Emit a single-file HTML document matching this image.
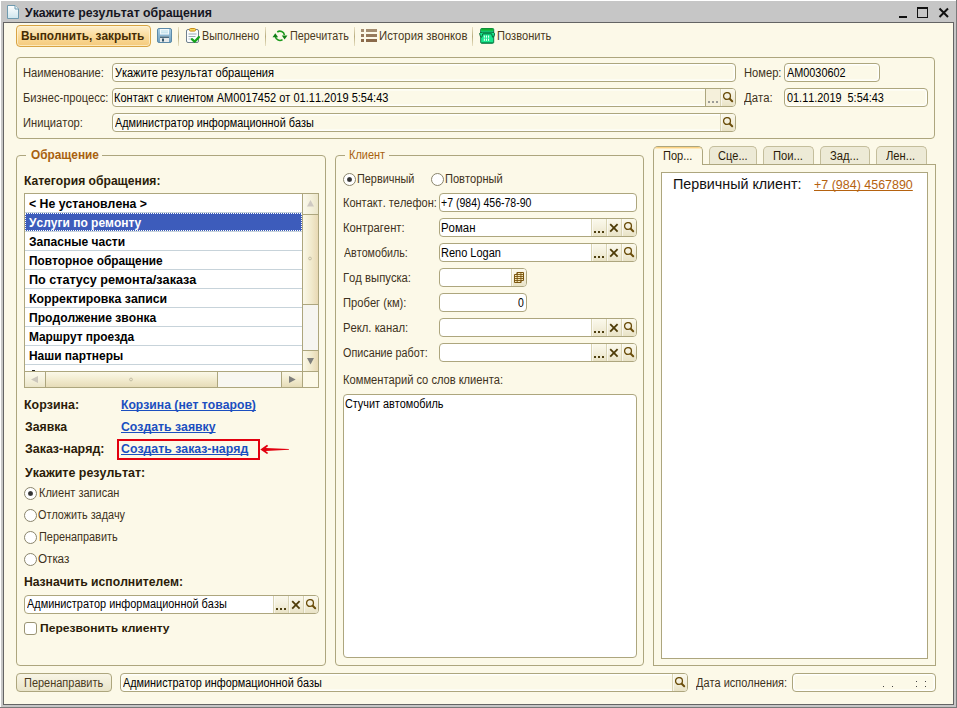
<!DOCTYPE html>
<html><head><meta charset="utf-8"><title>form</title>
<style>
html,body{margin:0;padding:0;}
body{width:957px;height:708px;overflow:hidden;position:relative;background:#FCF9E8;font-family:"Liberation Sans",sans-serif;}
#w{position:absolute;left:0;top:0;width:957px;height:708px;overflow:hidden;}
#w div,#w svg,#w span{position:absolute;}
.t{white-space:nowrap;text-decoration-skip-ink:none;font-kerning:none;}
</style></head><body><div id="w">
<div style="left:0px;top:0px;width:957px;height:708px;background:#C6C6C6;"></div>
<div style="left:0px;top:0px;width:957px;height:1px;background:#ffffff;"></div>
<div style="left:0px;top:0px;width:1px;height:708px;background:#ffffff;"></div>
<div style="left:956px;top:0px;width:1px;height:708px;background:#7a7a7a;"></div>
<div style="left:0px;top:707px;width:957px;height:1px;background:#7a7a7a;"></div>
<div style="left:3px;top:22px;width:951px;height:683px;background:#646464;"></div>
<div style="left:4px;top:23px;width:949px;height:681px;background:#FCF9E8;"></div>
<svg style="left:6px;top:4px" width="14" height="16" viewBox="0 0 14 16">
<defs><linearGradient id="dg" x1="0" y1="0" x2="0" y2="1"><stop offset="0" stop-color="#ffffff"/><stop offset="1" stop-color="#cfe6ee"/></linearGradient></defs>
<path d="M1.5 1.5 H9 L12.5 5 V14.5 H1.5 Z" fill="url(#dg)" stroke="#6f9bb0" stroke-width="1"/>
<path d="M9 1.5 V5 H12.5" fill="#eaf4f8" stroke="#6f9bb0" stroke-width="1"/></svg>
<span class="t" style="left:24.99px;top:6px;font-size:12.5px;line-height:14px;font-weight:bold;color:#15151f;transform:scaleX(0.9830);transform-origin:0 0;">Укажите результат обращения</span>
<div style="left:899px;top:16px;width:8px;height:2px;background:#111;"></div>
<div style="left:917px;top:7px;width:11px;height:11px;border:1px solid #111;border-top:2px solid #111;box-sizing:border-box;"></div>
<svg style="left:938px;top:7px" width="12" height="12" viewBox="0 0 12 12"><path d="M1.5 1.5 L10 10 M10 1.5 L1.5 10" stroke="#111" stroke-width="2" fill="none"/></svg>
<div style="left:16px;top:25px;width:135px;height:22px;border:1px solid #D9A443;border-radius:4px;box-sizing:border-box;background:linear-gradient(#FEEFCC,#FADB9C 50%,#F5CA7C);box-shadow:inset 0 0 0 1px rgba(255,245,215,0.7);"></div>
<span class="t" style="left:21.21px;top:29px;font-size:12px;line-height:14px;font-weight:bold;color:#452c04;transform:scaleX(0.9852);transform-origin:0 0;">Выполнить, закрыть</span>
<svg style="left:157px;top:28px" width="15" height="15" viewBox="0 0 15 15">
<defs><linearGradient id="sg" x1="0" y1="0" x2="0" y2="1"><stop offset="0" stop-color="#a9cfe6"/><stop offset="1" stop-color="#6d9dbd"/></linearGradient></defs>
<rect x="0.5" y="0.5" width="14" height="14" rx="1.5" fill="url(#sg)" stroke="#5c8aa8"/>
<rect x="3" y="1" width="9" height="5.5" fill="#f4fafc"/>
<rect x="4" y="2.5" width="7" height="1" fill="#b5dbe8"/><rect x="4" y="4.3" width="7" height="1" fill="#b5dbe8"/>
<rect x="3" y="8.5" width="9" height="5.5" fill="#e6e9ea"/><rect x="3" y="8.5" width="9" height="1.5" fill="#4d6b7e"/>
<rect x="5" y="10.5" width="2" height="3" fill="#34566b"/>
</svg>
<div style="left:178px;top:27px;width:1px;height:19px;background:linear-gradient(#e9e2c4,#b9ad80 50%,#e9e2c4);"></div>
<svg style="left:186px;top:28px" width="15" height="16" viewBox="0 0 15 16">
<rect x="0.5" y="1.5" width="12" height="13" rx="1.5" fill="#fbfdfe" stroke="#70808e"/>
<rect x="3.5" y="0.5" width="6" height="2.6" rx="1" fill="#f7d75a" stroke="#c98f1c"/>
<rect x="2.5" y="5.5" width="8" height="1" fill="#9aa9b4"/><rect x="2.5" y="8" width="7" height="1" fill="#9aa9b4"/><rect x="2.5" y="10.5" width="3" height="1" fill="#b9c6cf"/>
<path d="M5.9 11.2 L8.6 13.7 L12.9 9.1" stroke="#16a51c" stroke-width="2.3" fill="none" stroke-linecap="round" stroke-linejoin="round"/>
</svg>
<span class="t" style="left:202.11px;top:29px;font-size:12.5px;line-height:14px;font-weight:normal;color:#4a3a1c;transform:scaleX(0.8683);transform-origin:0 0;">Выполнено</span>
<div style="left:265px;top:27px;width:1px;height:19px;background:linear-gradient(#e9e2c4,#b9ad80 50%,#e9e2c4);"></div>
<svg style="left:272px;top:29px" width="16" height="14" viewBox="0 0 16 14">
<path d="M5.26 3.03 A4.6 4.6 0 0 1 12.43 6.0" stroke="#1c9a1c" stroke-width="1.6" fill="none"/>
<path d="M10.54 10.57 A4.6 4.6 0 0 1 3.37 7.6" stroke="#1c9a1c" stroke-width="1.6" fill="none"/>
<path d="M0.5 8.3 L3.3 4.3 L6.1 8.3 Z" fill="#0f7f14"/>
<path d="M9.8 6.6 L12.6 10.6 L15.4 6.6 Z" fill="#0f7f14"/>
</svg>
<span class="t" style="left:289.63px;top:29px;font-size:12.5px;line-height:14px;font-weight:normal;color:#4a3a1c;transform:scaleX(0.8618);transform-origin:0 0;">Перечитать</span>
<div style="left:354px;top:27px;width:1px;height:19px;background:linear-gradient(#e9e2c4,#b9ad80 50%,#e9e2c4);"></div>
<div style="left:361px;top:29px;width:3px;height:3px;background:#a58e70;"></div>
<div style="left:366px;top:29px;width:11px;height:3px;background:#a58e70;"></div>
<div style="left:361px;top:34px;width:3px;height:3px;background:#977b5c;"></div>
<div style="left:366px;top:34px;width:11px;height:3px;background:#977b5c;"></div>
<div style="left:361px;top:39px;width:3px;height:3px;background:#8a6a4b;"></div>
<div style="left:366px;top:39px;width:11px;height:3px;background:#8a6a4b;"></div>
<span class="t" style="left:378.57px;top:29px;font-size:12.5px;line-height:14px;font-weight:normal;color:#4a3a1c;transform:scaleX(0.9081);transform-origin:0 0;">История звонков</span>
<div style="left:472px;top:27px;width:1px;height:19px;background:linear-gradient(#e9e2c4,#b9ad80 50%,#e9e2c4);"></div>
<svg style="left:479px;top:28px" width="16" height="16" viewBox="0 0 16 16">
<rect x="1.7" y="0.5" width="13" height="14.8" rx="1" fill="#17E78C" stroke="#0c7a44"/>
<rect x="2.2" y="0.6" width="12" height="2.1" fill="#12AE2E"/>
<path d="M0.6 5.4 Q1.2 4.2 3.5 4.2 H12.9 Q15.2 4.2 15.6 5.6 L15 8.6 L13.6 9.2 L12.6 5.8 H3.8 L2.8 9.2 L1.4 8.6 Z" fill="#17E78C" stroke="#075a2c" stroke-width="0.9"/>
<rect x="4.8" y="7.5" width="1.1" height="2.2" fill="#eafff4"/><rect x="6.9" y="7.5" width="1.1" height="2.2" fill="#eafff4"/><rect x="9" y="7.5" width="1.1" height="2.2" fill="#eafff4"/>
<rect x="4.8" y="10.6" width="1.1" height="2.2" fill="#eafff4"/><rect x="6.9" y="10.6" width="1.1" height="2.2" fill="#eafff4"/><rect x="9" y="10.6" width="1.1" height="2.2" fill="#eafff4"/>
<rect x="2.2" y="14" width="12" height="1" fill="#0c9a58"/>
</svg>
<span class="t" style="left:496.60px;top:29px;font-size:12.5px;line-height:14px;font-weight:normal;color:#4a3a1c;transform:scaleX(0.8854);transform-origin:0 0;">Позвонить</span>
<div style="left:16px;top:57px;width:919px;height:82px;border:1px solid #ADA67E;border-radius:4px;box-sizing:border-box;"></div>
<span class="t" style="left:23.08px;top:66px;font-size:12.5px;line-height:14px;font-weight:normal;color:#3e3220;transform:scaleX(0.8967);transform-origin:0 0;">Наименование:</span>
<div style="left:112px;top:63px;width:624px;height:19px;border:1px solid #ADA67E;border-radius:4px;box-sizing:border-box;background:#FCF9E8;box-shadow:inset 0 0 0 1px #fffffc,inset 0 0 0 2px rgba(255,255,255,0.45);overflow:hidden;"></div>
<span class="t" style="left:114.70px;top:66px;font-size:12.5px;line-height:14px;font-weight:normal;color:#000;transform:scaleX(0.8870);transform-origin:0 0;">Укажите результат обращения</span>
<span class="t" style="left:23.09px;top:91px;font-size:12.5px;line-height:14px;font-weight:normal;color:#3e3220;transform:scaleX(0.8904);transform-origin:0 0;">Бизнес-процесс:</span>
<div style="left:112px;top:88px;width:624px;height:19px;border:1px solid #ADA67E;border-radius:4px;box-sizing:border-box;background:#FCF9E8;box-shadow:inset 0 0 0 1px #fffffc,inset 0 0 0 2px rgba(255,255,255,0.45);overflow:hidden;"></div>
<div style="left:705px;top:89px;width:30px;height:17px;background:linear-gradient(#FBF9EC,#F3EFDC 50%,#E9E3C6);border-radius:0 3px 3px 0;"></div>
<div style="left:705px;top:89px;width:15px;height:17px;background:#F5F0DB;"></div>
<div style="left:705px;top:89px;width:1px;height:17px;background:#ADA67E;"></div>
<div style="left:708px;top:101px;width:2px;height:2px;background:#9c9c98;"></div>
<div style="left:712px;top:101px;width:2px;height:2px;background:#9c9c98;"></div>
<div style="left:716px;top:101px;width:2px;height:2px;background:#9c9c98;"></div>
<div style="left:720px;top:89px;width:1px;height:17px;background:#d9d4b4;"></div>
<div style="left:721px;top:89px;width:1px;height:17px;background:rgba(255,255,255,0.6);"></div>
<svg style="left:723px;top:92px" width="12" height="12" viewBox="0 0 12 12"><circle cx="4" cy="4" r="3.45" stroke="#6b4e0c" stroke-width="1.3" fill="none"/><path d="M6.7 6.7 L9.2 9.2" stroke="#6b4e0c" stroke-width="2" stroke-linecap="round"/></svg>
<span class="t" style="left:114.10px;top:91px;font-size:12.5px;line-height:14px;font-weight:normal;color:#000;transform:scaleX(0.8814);transform-origin:0 0;">Контакт с клиентом АМ0017452 от 01.11.2019 5:54:43</span>
<span class="t" style="left:23.08px;top:116px;font-size:12.5px;line-height:14px;font-weight:normal;color:#3e3220;transform:scaleX(0.8937);transform-origin:0 0;">Инициатор:</span>
<div style="left:112px;top:113px;width:624px;height:19px;border:1px solid #ADA67E;border-radius:4px;box-sizing:border-box;background:#FCF9E8;box-shadow:inset 0 0 0 1px #fffffc,inset 0 0 0 2px rgba(255,255,255,0.45);overflow:hidden;"></div>
<div style="left:720px;top:114px;width:15px;height:17px;background:linear-gradient(#FBF9EC,#F3EFDC 50%,#E9E3C6);border-radius:0 3px 3px 0;"></div>
<div style="left:720px;top:114px;width:1px;height:17px;background:#d9d4b4;"></div>
<div style="left:721px;top:114px;width:1px;height:17px;background:rgba(255,255,255,0.6);"></div>
<svg style="left:723px;top:117px" width="12" height="12" viewBox="0 0 12 12"><circle cx="4" cy="4" r="3.45" stroke="#6b4e0c" stroke-width="1.3" fill="none"/><path d="M6.7 6.7 L9.2 9.2" stroke="#6b4e0c" stroke-width="2" stroke-linecap="round"/></svg>
<span class="t" style="left:114.98px;top:116px;font-size:12.5px;line-height:14px;font-weight:normal;color:#000;transform:scaleX(0.8687);transform-origin:0 0;">Администратор информационной базы</span>
<span class="t" style="left:743.58px;top:66px;font-size:12.5px;line-height:14px;font-weight:normal;color:#3e3220;transform:scaleX(0.8923);transform-origin:0 0;">Номер:</span>
<div style="left:784px;top:63px;width:96px;height:19px;border:1px solid #ADA67E;border-radius:4px;box-sizing:border-box;background:#FCF9E8;box-shadow:inset 0 0 0 1px #fffffc,inset 0 0 0 2px rgba(255,255,255,0.45);overflow:hidden;"></div>
<span class="t" style="left:786.98px;top:66px;font-size:12.5px;line-height:14px;font-weight:normal;color:#000;transform:scaleX(0.8688);transform-origin:0 0;">АМ0030602</span>
<span class="t" style="left:744.42px;top:91px;font-size:12.5px;line-height:14px;font-weight:normal;color:#3e3220;transform:scaleX(0.9066);transform-origin:0 0;">Дата:</span>
<div style="left:784px;top:88px;width:144px;height:19px;border:1px solid #ADA67E;border-radius:4px;box-sizing:border-box;background:#FCF9E8;box-shadow:inset 0 0 0 1px #fffffc,inset 0 0 0 2px rgba(255,255,255,0.45);overflow:hidden;"></div>
<span class="t" style="left:786.57px;top:91px;font-size:12.5px;line-height:14px;font-weight:normal;color:#000;transform:scaleX(0.8713);transform-origin:0 0;">01.11.2019&nbsp; 5:54:43</span>
<div style="left:16px;top:155px;width:310px;height:511px;border:1px solid #ADA67E;border-radius:4px;box-sizing:border-box;"></div>
<div style="left:26px;top:155px;width:76px;height:2px;background:#FCF9E8;"></div>
<span class="t" style="left:30.51px;top:148px;font-size:12.5px;line-height:14px;font-weight:bold;color:#a8610e;transform:scaleX(0.9466);transform-origin:0 0;">Обращение</span>
<span class="t" style="left:24.19px;top:174px;font-size:12.5px;line-height:14px;font-weight:bold;color:#2b1c08;transform:scaleX(0.9699);transform-origin:0 0;">Категория обращения:</span>
<div style="left:24px;top:193px;width:295px;height:195px;border:1px solid #ADA67E;box-sizing:border-box;background:#fff;"></div>
<div style="left:25px;top:212px;width:277px;height:1px;background:#C7D3DA;"></div>
<span class="t" style="left:28.98px;top:197px;font-size:12.5px;line-height:14px;font-weight:bold;color:#000;transform:scaleX(0.9815);transform-origin:0 0;">&lt; Не установлена &gt;</span>
<div style="left:25px;top:231px;width:277px;height:1px;background:#C7D3DA;"></div>
<div style="left:25px;top:213px;width:277px;height:18px;background:#3D5CBB;"></div>
<div style="left:25px;top:213px;width:277px;height:18px;background:repeating-linear-gradient(90deg,#fff 0 1px,transparent 1px 2px) 0 0/100% 1px no-repeat,repeating-linear-gradient(90deg,#fff 0 1px,transparent 1px 2px) 0 100%/100% 1px no-repeat,repeating-linear-gradient(0deg,#fff 0 1px,transparent 1px 2px) 0 0/1px 100% no-repeat,repeating-linear-gradient(0deg,#fff 0 1px,transparent 1px 2px) 100% 0/1px 100% no-repeat;"></div>
<span class="t" style="left:29.49px;top:216px;font-size:12.5px;line-height:14px;font-weight:bold;color:#fff;transform:scaleX(0.9600);transform-origin:0 0;">Услуги по ремонту</span>
<div style="left:25px;top:250px;width:277px;height:1px;background:#C7D3DA;"></div>
<span class="t" style="left:29.23px;top:235px;font-size:12.5px;line-height:14px;font-weight:bold;color:#000;transform:scaleX(0.9625);transform-origin:0 0;">Запасные части</span>
<div style="left:25px;top:269px;width:277px;height:1px;background:#C7D3DA;"></div>
<span class="t" style="left:28.71px;top:254px;font-size:12.5px;line-height:14px;font-weight:bold;color:#000;transform:scaleX(0.9486);transform-origin:0 0;">Повторное обращение</span>
<div style="left:25px;top:288px;width:277px;height:1px;background:#C7D3DA;"></div>
<span class="t" style="left:28.66px;top:273px;font-size:12.5px;line-height:14px;font-weight:bold;color:#000;transform:scaleX(1.0096);transform-origin:0 0;">По статусу ремонта/заказа</span>
<div style="left:25px;top:307px;width:277px;height:1px;background:#C7D3DA;"></div>
<span class="t" style="left:28.68px;top:292px;font-size:12.5px;line-height:14px;font-weight:bold;color:#000;transform:scaleX(0.9854);transform-origin:0 0;">Корректировка записи</span>
<div style="left:25px;top:326px;width:277px;height:1px;background:#C7D3DA;"></div>
<span class="t" style="left:28.69px;top:311px;font-size:12.5px;line-height:14px;font-weight:bold;color:#000;transform:scaleX(0.9673);transform-origin:0 0;">Продолжение звонка</span>
<div style="left:25px;top:345px;width:277px;height:1px;background:#C7D3DA;"></div>
<span class="t" style="left:28.70px;top:330px;font-size:12.5px;line-height:14px;font-weight:bold;color:#000;transform:scaleX(0.9525);transform-origin:0 0;">Маршрут проезда</span>
<div style="left:25px;top:364px;width:277px;height:1px;background:#C7D3DA;"></div>
<span class="t" style="left:28.70px;top:349px;font-size:12.5px;line-height:14px;font-weight:bold;color:#000;transform:scaleX(0.9544);transform-origin:0 0;">Наши партнеры</span>
<div style="left:32px;top:370px;width:3px;height:1px;background:#222;"></div>
<div style="left:302px;top:194px;width:16px;height:177px;background:#F6F5F0;"></div>
<div style="left:302px;top:194px;width:1px;height:177px;background:#ADA67E;"></div>
<div style="left:303px;top:194px;width:15px;height:20px;background:linear-gradient(90deg,#FBF9EC,#F3EFD9 60%,#EBE5C9);"></div>
<div style="left:303px;top:214px;width:15px;height:1px;background:#ADA67E;"></div>
<div style="left:303px;top:215px;width:15px;height:89px;background:linear-gradient(90deg,#FBF8E8,#F1EACD 55%,#E8D9B4);"></div>
<div style="left:303px;top:304px;width:15px;height:1px;background:#ADA67E;"></div>
<div style="left:303px;top:350px;width:15px;height:1px;background:#ADA67E;"></div>
<div style="left:303px;top:351px;width:15px;height:20px;background:linear-gradient(90deg,#FBF8E8,#F1EACD 55%,#E8D9B4);"></div>
<svg style="left:307px;top:200px" width="7" height="7" viewBox="0 0 7 7"><path d="M0 6.5 L3.5 0 L7 6.5 Z" fill="#cfc9c2"/></svg>
<svg style="left:307px;top:358px" width="7" height="7" viewBox="0 0 7 7"><path d="M0 0 L7 0 L3.5 6.5 Z" fill="#7f7f7c"/></svg>
<svg style="left:308px;top:256px" width="4" height="5" viewBox="0 0 4 5"><circle cx="2" cy="2.5" r="1.4" fill="none" stroke="#b9b39a" stroke-width="0.8"/></svg>
<div style="left:25px;top:371px;width:293px;height:1px;background:#ADA67E;"></div>
<div style="left:25px;top:372px;width:293px;height:15px;background:#F8F7F1;"></div>
<div style="left:25px;top:372px;width:20px;height:15px;background:linear-gradient(#FBF9EC,#F3EFD9 60%,#EBE5C9);"></div>
<div style="left:45px;top:372px;width:1px;height:15px;background:#ADA67E;"></div>
<div style="left:46px;top:372px;width:171px;height:15px;background:linear-gradient(#FBF8E8,#F1EACD 55%,#E6DCB8);"></div>
<div style="left:217px;top:372px;width:1px;height:15px;background:#ADA67E;"></div>
<div style="left:281px;top:372px;width:1px;height:15px;background:#ADA67E;"></div>
<div style="left:282px;top:372px;width:20px;height:15px;background:linear-gradient(#FBF8E8,#F1EACD 55%,#E6DCB8);"></div>
<div style="left:302px;top:371px;width:1px;height:16px;background:#ADA67E;"></div>
<div style="left:303px;top:372px;width:15px;height:15px;background:#FCF9E8;"></div>
<svg style="left:31px;top:376px" width="7" height="7" viewBox="0 0 7 7"><path d="M7 0 L0 3.5 L7 7 Z" fill="#cbc6bb"/></svg>
<svg style="left:289px;top:376px" width="7" height="7" viewBox="0 0 7 7"><path d="M0 0 L6.7 3.5 L0 7 Z" fill="#7f7f7c"/></svg>
<svg style="left:129px;top:377px" width="4" height="5" viewBox="0 0 4 5"><circle cx="2" cy="2.5" r="1.4" fill="none" stroke="#b9b39a" stroke-width="0.8"/></svg>
<span class="t" style="left:24.17px;top:398px;font-size:12.5px;line-height:14px;font-weight:bold;color:#2b1c08;transform:scaleX(0.9921);transform-origin:0 0;">Корзина:</span>
<span class="t" style="left:120.69px;top:398px;font-size:12.5px;line-height:14px;font-weight:bold;color:#1b4fc0;transform:scaleX(0.9738);transform-origin:0 0;text-decoration:underline;">Корзина (нет товаров)</span>
<span class="t" style="left:24.72px;top:420px;font-size:12.5px;line-height:14px;font-weight:bold;color:#2b1c08;transform:scaleX(0.9821);transform-origin:0 0;">Заявка</span>
<span class="t" style="left:121.00px;top:420px;font-size:12.5px;line-height:14px;font-weight:bold;color:#1b4fc0;transform:scaleX(0.9811);transform-origin:0 0;text-decoration:underline;">Создать заявку</span>
<span class="t" style="left:24.72px;top:442px;font-size:12.5px;line-height:14px;font-weight:bold;color:#2b1c08;transform:scaleX(0.9947);transform-origin:0 0;">Заказ-наряд:</span>
<span class="t" style="left:120.99px;top:442px;font-size:12.5px;line-height:14px;font-weight:bold;color:#1b4fc0;transform:scaleX(0.9851);transform-origin:0 0;text-decoration:underline;">Создать заказ-наряд</span>
<div style="left:117px;top:439px;width:143px;height:21px;border:2px solid #e2000f;box-sizing:border-box;"></div>
<svg style="left:260px;top:444px" width="30" height="11" viewBox="0 0 30 11"><path d="M0.3 5.4 L7.0 0.8 L8.2 1.9 L5.8 3.9 L28.9 5.0 L28.9 5.8 L5.8 6.9 L8.2 8.9 L7.0 10 Z" fill="#e2000f"/></svg>
<span class="t" style="left:24.99px;top:466px;font-size:12.5px;line-height:14px;font-weight:bold;color:#2b1c08;transform:scaleX(0.9949);transform-origin:0 0;">Укажите результат:</span>
<div style="left:24.0px;top:487.0px;width:13px;height:13px;border:1px solid #8a856c;border-radius:50%;box-sizing:border-box;background:#fff;"><div style="left:3px;top:3px;width:5px;height:5px;border-radius:50%;background:radial-gradient(#333 40%,#777);"></div></div>
<span class="t" style="left:39.29px;top:486px;font-size:12.5px;line-height:14px;font-weight:normal;color:#3e3220;transform:scaleX(0.8828);transform-origin:0 0;">Клиент записан</span>
<div style="left:24.0px;top:509.0px;width:13px;height:13px;border:1px solid #8a856c;border-radius:50%;box-sizing:border-box;background:#fff;"></div>
<span class="t" style="left:38.49px;top:508px;font-size:12.5px;line-height:14px;font-weight:normal;color:#3e3220;transform:scaleX(0.8665);transform-origin:0 0;">Отложить задачу</span>
<div style="left:24.0px;top:531.0px;width:13px;height:13px;border:1px solid #8a856c;border-radius:50%;box-sizing:border-box;background:#fff;"></div>
<span class="t" style="left:39.32px;top:530px;font-size:12.5px;line-height:14px;font-weight:normal;color:#3e3220;transform:scaleX(0.8715);transform-origin:0 0;">Перенаправить</span>
<div style="left:24.0px;top:553.0px;width:13px;height:13px;border:1px solid #8a856c;border-radius:50%;box-sizing:border-box;background:#fff;"></div>
<span class="t" style="left:38.45px;top:552px;font-size:12.5px;line-height:14px;font-weight:normal;color:#3e3220;transform:scaleX(0.9374);transform-origin:0 0;">Отказ</span>
<span class="t" style="left:23.69px;top:575px;font-size:12.5px;line-height:14px;font-weight:bold;color:#2b1c08;transform:scaleX(0.9737);transform-origin:0 0;">Назначить исполнителем:</span>
<div style="left:24px;top:595px;width:295px;height:19px;border:1px solid #ADA67E;border-radius:4px;box-sizing:border-box;background:#fff;overflow:hidden;"></div>
<div style="left:273px;top:596px;width:45px;height:17px;background:linear-gradient(#FBF9EC,#F3EFDC 50%,#E9E3C6);border-radius:0 3px 3px 0;"></div>
<div style="left:273px;top:596px;width:1px;height:17px;background:#d9d4b4;"></div>
<div style="left:274px;top:596px;width:1px;height:17px;background:rgba(255,255,255,0.6);"></div>
<div style="left:276px;top:608px;width:2px;height:2px;background:#4e3f10;"></div>
<div style="left:280px;top:608px;width:2px;height:2px;background:#4e3f10;"></div>
<div style="left:284px;top:608px;width:2px;height:2px;background:#4e3f10;"></div>
<div style="left:288px;top:596px;width:1px;height:17px;background:#d9d4b4;"></div>
<div style="left:289px;top:596px;width:1px;height:17px;background:rgba(255,255,255,0.6);"></div>
<svg style="left:291px;top:599.6px" width="10" height="10" viewBox="0 0 10 10"><path d="M1.2 1.2 L8.6 8.6 M8.6 1.2 L1.2 8.6" stroke="#4e3c08" stroke-width="1.8" fill="none"/></svg>
<div style="left:303px;top:596px;width:1px;height:17px;background:#d9d4b4;"></div>
<div style="left:304px;top:596px;width:1px;height:17px;background:rgba(255,255,255,0.6);"></div>
<svg style="left:306px;top:599px" width="12" height="12" viewBox="0 0 12 12"><circle cx="4" cy="4" r="3.45" stroke="#6b4e0c" stroke-width="1.3" fill="none"/><path d="M6.7 6.7 L9.2 9.2" stroke="#6b4e0c" stroke-width="2" stroke-linecap="round"/></svg>
<span class="t" style="left:26.98px;top:597px;font-size:12.5px;line-height:14px;font-weight:normal;color:#000;transform:scaleX(0.8731);transform-origin:0 0;">Администратор информационной базы</span>
<div style="left:24px;top:622px;width:13px;height:13px;border:1px solid #9a9474;border-radius:3px;box-sizing:border-box;background:#fff;"></div>
<span class="t" style="left:40.19px;top:621px;font-size:11.8px;line-height:14px;font-weight:bold;color:#2b1c08;transform:scaleX(1.0225);transform-origin:0 0;">Перезвонить клиенту</span>
<div style="left:335px;top:155px;width:309px;height:511px;border:1px solid #ADA67E;border-radius:4px;box-sizing:border-box;"></div>
<div style="left:345px;top:155px;width:44px;height:2px;background:#FCF9E8;"></div>
<span class="t" style="left:349.10px;top:148px;font-size:12.5px;line-height:14px;font-weight:normal;color:#a8610e;transform:scaleX(0.8772);transform-origin:0 0;">Клиент</span>
<div style="left:343.0px;top:173.0px;width:13px;height:13px;border:1px solid #8a856c;border-radius:50%;box-sizing:border-box;background:#fff;"><div style="left:3px;top:3px;width:5px;height:5px;border-radius:50%;background:radial-gradient(#333 40%,#777);"></div></div>
<span class="t" style="left:357.42px;top:172px;font-size:12.5px;line-height:14px;font-weight:normal;color:#3e3220;transform:scaleX(0.8701);transform-origin:0 0;">Первичный</span>
<div style="left:431.0px;top:173.0px;width:13px;height:13px;border:1px solid #8a856c;border-radius:50%;box-sizing:border-box;background:#fff;"></div>
<span class="t" style="left:445.10px;top:172px;font-size:12.5px;line-height:14px;font-weight:normal;color:#3e3220;transform:scaleX(0.8861);transform-origin:0 0;">Повторный</span>
<span class="t" style="left:342.90px;top:196px;font-size:12.5px;line-height:14px;font-weight:normal;color:#3e3220;transform:scaleX(0.8809);transform-origin:0 0;">Контакт. телефон:</span>
<div style="left:439px;top:193px;width:198px;height:19px;border:1px solid #ADA67E;border-radius:4px;box-sizing:border-box;background:#fff;overflow:hidden;"></div>
<span class="t" style="left:441.49px;top:196px;font-size:12.5px;line-height:14px;font-weight:normal;color:#000;transform:scaleX(0.8422);transform-origin:0 0;">+7 (984) 456-78-90</span>
<span class="t" style="left:342.88px;top:221px;font-size:12.5px;line-height:14px;font-weight:normal;color:#3e3220;transform:scaleX(0.9017);transform-origin:0 0;">Контрагент:</span>
<div style="left:439px;top:218px;width:198px;height:19px;border:1px solid #ADA67E;border-radius:4px;box-sizing:border-box;background:#fff;overflow:hidden;"></div>
<div style="left:591px;top:219px;width:45px;height:17px;background:linear-gradient(#FBF9EC,#F3EFDC 50%,#E9E3C6);border-radius:0 3px 3px 0;"></div>
<div style="left:591px;top:219px;width:1px;height:17px;background:#d9d4b4;"></div>
<div style="left:592px;top:219px;width:1px;height:17px;background:rgba(255,255,255,0.6);"></div>
<div style="left:594px;top:231px;width:2px;height:2px;background:#4e3f10;"></div>
<div style="left:598px;top:231px;width:2px;height:2px;background:#4e3f10;"></div>
<div style="left:602px;top:231px;width:2px;height:2px;background:#4e3f10;"></div>
<div style="left:606px;top:219px;width:1px;height:17px;background:#d9d4b4;"></div>
<div style="left:607px;top:219px;width:1px;height:17px;background:rgba(255,255,255,0.6);"></div>
<svg style="left:609px;top:222.6px" width="10" height="10" viewBox="0 0 10 10"><path d="M1.2 1.2 L8.6 8.6 M8.6 1.2 L1.2 8.6" stroke="#4e3c08" stroke-width="1.8" fill="none"/></svg>
<div style="left:621px;top:219px;width:1px;height:17px;background:#d9d4b4;"></div>
<div style="left:622px;top:219px;width:1px;height:17px;background:rgba(255,255,255,0.6);"></div>
<svg style="left:624px;top:222px" width="12" height="12" viewBox="0 0 12 12"><circle cx="4" cy="4" r="3.45" stroke="#6b4e0c" stroke-width="1.3" fill="none"/><path d="M6.7 6.7 L9.2 9.2" stroke="#6b4e0c" stroke-width="2" stroke-linecap="round"/></svg>
<span class="t" style="left:441.06px;top:221px;font-size:12.5px;line-height:14px;font-weight:normal;color:#000;transform:scaleX(0.9122);transform-origin:0 0;">Роман</span>
<span class="t" style="left:343.78px;top:246px;font-size:12.5px;line-height:14px;font-weight:normal;color:#3e3220;transform:scaleX(0.8536);transform-origin:0 0;">Автомобиль:</span>
<div style="left:439px;top:243px;width:198px;height:19px;border:1px solid #ADA67E;border-radius:4px;box-sizing:border-box;background:#fff;overflow:hidden;"></div>
<div style="left:591px;top:244px;width:45px;height:17px;background:linear-gradient(#FBF9EC,#F3EFDC 50%,#E9E3C6);border-radius:0 3px 3px 0;"></div>
<div style="left:591px;top:244px;width:1px;height:17px;background:#d9d4b4;"></div>
<div style="left:592px;top:244px;width:1px;height:17px;background:rgba(255,255,255,0.6);"></div>
<div style="left:594px;top:256px;width:2px;height:2px;background:#4e3f10;"></div>
<div style="left:598px;top:256px;width:2px;height:2px;background:#4e3f10;"></div>
<div style="left:602px;top:256px;width:2px;height:2px;background:#4e3f10;"></div>
<div style="left:606px;top:244px;width:1px;height:17px;background:#d9d4b4;"></div>
<div style="left:607px;top:244px;width:1px;height:17px;background:rgba(255,255,255,0.6);"></div>
<svg style="left:609px;top:247.6px" width="10" height="10" viewBox="0 0 10 10"><path d="M1.2 1.2 L8.6 8.6 M8.6 1.2 L1.2 8.6" stroke="#4e3c08" stroke-width="1.8" fill="none"/></svg>
<div style="left:621px;top:244px;width:1px;height:17px;background:#d9d4b4;"></div>
<div style="left:622px;top:244px;width:1px;height:17px;background:rgba(255,255,255,0.6);"></div>
<svg style="left:624px;top:247px" width="12" height="12" viewBox="0 0 12 12"><circle cx="4" cy="4" r="3.45" stroke="#6b4e0c" stroke-width="1.3" fill="none"/><path d="M6.7 6.7 L9.2 9.2" stroke="#6b4e0c" stroke-width="2" stroke-linecap="round"/></svg>
<span class="t" style="left:441.10px;top:246px;font-size:12.5px;line-height:14px;font-weight:normal;color:#000;transform:scaleX(0.8796);transform-origin:0 0;">Reno Logan</span>
<span class="t" style="left:342.68px;top:271px;font-size:12.5px;line-height:14px;font-weight:normal;color:#3e3220;transform:scaleX(0.9014);transform-origin:0 0;">Год выпуска:</span>
<div style="left:439px;top:268px;width:88px;height:19px;border:1px solid #ADA67E;border-radius:4px;box-sizing:border-box;background:#fff;overflow:hidden;"></div>
<div style="left:511px;top:269px;width:15px;height:17px;background:linear-gradient(#FBF9EC,#F3EFDC 50%,#E9E3C6);border-radius:0 3px 3px 0;"></div>
<div style="left:511px;top:269px;width:1px;height:17px;background:#d9d4b4;"></div>
<div style="left:512px;top:269px;width:1px;height:17px;background:rgba(255,255,255,0.6);"></div>
<svg style="left:514px;top:272px" width="10" height="11" viewBox="0 0 10 11"><path d="M3 0.5 H9.5 V8.5 H7 V10.5 H0.5 V2.5 H3 Z" fill="#f6ebba" stroke="#7a5510" stroke-width="1"/><path d="M3 2.5 H9.5 M0.5 4.5 H9.5 M0.5 6.5 H9.5 M0.5 8.5 H7 M3.2 0.5 V10.5 M6.9 0.5 V10.5" stroke="#7a5510" stroke-width="0.9" fill="none"/></svg>
<span class="t" style="left:342.89px;top:296px;font-size:12.5px;line-height:14px;font-weight:normal;color:#3e3220;transform:scaleX(0.8947);transform-origin:0 0;">Пробег (км):</span>
<div style="left:439px;top:293px;width:88px;height:19px;border:1px solid #ADA67E;border-radius:4px;box-sizing:border-box;background:#fff;overflow:hidden;"></div>
<span class="t" style="left:518.09px;top:296px;font-size:12.5px;line-height:14px;font-weight:normal;color:#000;transform:scaleX(0.8368);transform-origin:0 0;">0</span>
<span class="t" style="left:342.87px;top:321px;font-size:12.5px;line-height:14px;font-weight:normal;color:#3e3220;transform:scaleX(0.9045);transform-origin:0 0;">Рекл. канал:</span>
<div style="left:439px;top:318px;width:198px;height:19px;border:1px solid #ADA67E;border-radius:4px;box-sizing:border-box;background:#fff;overflow:hidden;"></div>
<div style="left:591px;top:319px;width:45px;height:17px;background:linear-gradient(#FBF9EC,#F3EFDC 50%,#E9E3C6);border-radius:0 3px 3px 0;"></div>
<div style="left:591px;top:319px;width:1px;height:17px;background:#d9d4b4;"></div>
<div style="left:592px;top:319px;width:1px;height:17px;background:rgba(255,255,255,0.6);"></div>
<div style="left:594px;top:331px;width:2px;height:2px;background:#4e3f10;"></div>
<div style="left:598px;top:331px;width:2px;height:2px;background:#4e3f10;"></div>
<div style="left:602px;top:331px;width:2px;height:2px;background:#4e3f10;"></div>
<div style="left:606px;top:319px;width:1px;height:17px;background:#d9d4b4;"></div>
<div style="left:607px;top:319px;width:1px;height:17px;background:rgba(255,255,255,0.6);"></div>
<svg style="left:609px;top:322.6px" width="10" height="10" viewBox="0 0 10 10"><path d="M1.2 1.2 L8.6 8.6 M8.6 1.2 L1.2 8.6" stroke="#4e3c08" stroke-width="1.8" fill="none"/></svg>
<div style="left:621px;top:319px;width:1px;height:17px;background:#d9d4b4;"></div>
<div style="left:622px;top:319px;width:1px;height:17px;background:rgba(255,255,255,0.6);"></div>
<svg style="left:624px;top:322px" width="12" height="12" viewBox="0 0 12 12"><circle cx="4" cy="4" r="3.45" stroke="#6b4e0c" stroke-width="1.3" fill="none"/><path d="M6.7 6.7 L9.2 9.2" stroke="#6b4e0c" stroke-width="2" stroke-linecap="round"/></svg>
<span class="t" style="left:343.29px;top:346px;font-size:12.5px;line-height:14px;font-weight:normal;color:#3e3220;transform:scaleX(0.8625);transform-origin:0 0;">Описание работ:</span>
<div style="left:439px;top:343px;width:198px;height:19px;border:1px solid #ADA67E;border-radius:4px;box-sizing:border-box;background:#fff;overflow:hidden;"></div>
<div style="left:591px;top:344px;width:45px;height:17px;background:linear-gradient(#FBF9EC,#F3EFDC 50%,#E9E3C6);border-radius:0 3px 3px 0;"></div>
<div style="left:591px;top:344px;width:1px;height:17px;background:#d9d4b4;"></div>
<div style="left:592px;top:344px;width:1px;height:17px;background:rgba(255,255,255,0.6);"></div>
<div style="left:594px;top:356px;width:2px;height:2px;background:#4e3f10;"></div>
<div style="left:598px;top:356px;width:2px;height:2px;background:#4e3f10;"></div>
<div style="left:602px;top:356px;width:2px;height:2px;background:#4e3f10;"></div>
<div style="left:606px;top:344px;width:1px;height:17px;background:#d9d4b4;"></div>
<div style="left:607px;top:344px;width:1px;height:17px;background:rgba(255,255,255,0.6);"></div>
<svg style="left:609px;top:347.6px" width="10" height="10" viewBox="0 0 10 10"><path d="M1.2 1.2 L8.6 8.6 M8.6 1.2 L1.2 8.6" stroke="#4e3c08" stroke-width="1.8" fill="none"/></svg>
<div style="left:621px;top:344px;width:1px;height:17px;background:#d9d4b4;"></div>
<div style="left:622px;top:344px;width:1px;height:17px;background:rgba(255,255,255,0.6);"></div>
<svg style="left:624px;top:347px" width="12" height="12" viewBox="0 0 12 12"><circle cx="4" cy="4" r="3.45" stroke="#6b4e0c" stroke-width="1.3" fill="none"/><path d="M6.7 6.7 L9.2 9.2" stroke="#6b4e0c" stroke-width="2" stroke-linecap="round"/></svg>
<span class="t" style="left:342.88px;top:373px;font-size:12.5px;line-height:14px;font-weight:normal;color:#3e3220;transform:scaleX(0.8927);transform-origin:0 0;">Комментарий со слов клиента:</span>
<div style="left:343px;top:394px;width:294px;height:264px;border:1px solid #ADA67E;border-radius:4px;box-sizing:border-box;background:#fff;"></div>
<span class="t" style="left:344.95px;top:397px;font-size:12.5px;line-height:14px;font-weight:normal;color:#000;transform:scaleX(0.8681);transform-origin:0 0;">Стучит автомобиль</span>
<div style="left:709px;top:146px;width:48px;height:19px;border:1px solid #c4be9c;border-bottom:none;border-radius:5px 5px 0 0;box-sizing:border-box;background:#EDEAD6;"></div>
<div style="left:763px;top:146px;width:51px;height:19px;border:1px solid #c4be9c;border-bottom:none;border-radius:5px 5px 0 0;box-sizing:border-box;background:#EDEAD6;"></div>
<div style="left:820px;top:146px;width:50px;height:19px;border:1px solid #c4be9c;border-bottom:none;border-radius:5px 5px 0 0;box-sizing:border-box;background:#EDEAD6;"></div>
<div style="left:876px;top:146px;width:51px;height:19px;border:1px solid #c4be9c;border-bottom:none;border-radius:5px 5px 0 0;box-sizing:border-box;background:#EDEAD6;"></div>
<div style="left:653px;top:164px;width:283px;height:502px;border:1px solid #ADA67E;box-sizing:border-box;"></div>
<div style="left:653px;top:146px;width:50px;height:19px;border:1px solid #ADA67E;border-bottom:none;border-radius:5px 5px 0 0;box-sizing:border-box;background:linear-gradient(#FCF9E8,#FCF9E8);overflow:hidden;"><div style="left:0;top:0;width:48px;height:1px;background:#FCD283;"></div><div style="left:0;top:1px;width:48px;height:1px;background:#FDE9BC;"></div></div>
<span class="t" style="left:663.11px;top:149px;font-size:12.5px;line-height:14px;font-weight:normal;color:#2b1c08;transform:scaleX(0.8828);transform-origin:0 0;">Пор...</span>
<span class="t" style="left:717.94px;top:149px;font-size:12.5px;line-height:14px;font-weight:normal;color:#2b1c08;transform:scaleX(0.8810);transform-origin:0 0;">Сце...</span>
<span class="t" style="left:772.59px;top:149px;font-size:12.5px;line-height:14px;font-weight:normal;color:#2b1c08;transform:scaleX(0.8979);transform-origin:0 0;">Пои...</span>
<span class="t" style="left:829.63px;top:149px;font-size:12.5px;line-height:14px;font-weight:normal;color:#2b1c08;transform:scaleX(0.8968);transform-origin:0 0;">Зад...</span>
<span class="t" style="left:885.90px;top:149px;font-size:12.5px;line-height:14px;font-weight:normal;color:#2b1c08;transform:scaleX(0.8967);transform-origin:0 0;">Лен...</span>
<div style="left:661px;top:172px;width:267px;height:487px;border:1px solid #ADA67E;box-sizing:border-box;background:#fff;"></div>
<span class="t" style="left:673.34px;top:176px;font-size:14px;line-height:16px;font-weight:normal;color:#111;transform:scaleX(1.0226);transform-origin:0 0;">Первичный клиент:</span>
<span class="t" style="left:813.69px;top:177px;font-size:13px;line-height:15px;font-weight:normal;color:#b5620f;transform:scaleX(0.9592);transform-origin:0 0;text-decoration:underline;">+7 (984) 4567890</span>
<div style="left:16px;top:673px;width:96px;height:19px;border:1px solid #ADA67E;border-radius:4px;box-sizing:border-box;background:linear-gradient(#F8F5E6,#E9E4C9);"></div>
<span class="t" style="left:23.51px;top:676px;font-size:12.5px;line-height:14px;font-weight:normal;color:#4a3a1c;transform:scaleX(0.8782);transform-origin:0 0;">Перенаправить</span>
<div style="left:120px;top:673px;width:568px;height:19px;border:1px solid #ADA67E;border-radius:4px;box-sizing:border-box;background:#FCF9E8;box-shadow:inset 0 0 0 1px #fffffc,inset 0 0 0 2px rgba(255,255,255,0.45);overflow:hidden;"></div>
<div style="left:672px;top:674px;width:15px;height:17px;background:linear-gradient(#FBF9EC,#F3EFDC 50%,#E9E3C6);border-radius:0 3px 3px 0;"></div>
<div style="left:672px;top:674px;width:1px;height:17px;background:#d9d4b4;"></div>
<div style="left:673px;top:674px;width:1px;height:17px;background:rgba(255,255,255,0.6);"></div>
<svg style="left:675px;top:677px" width="12" height="12" viewBox="0 0 12 12"><circle cx="4" cy="4" r="3.45" stroke="#6b4e0c" stroke-width="1.3" fill="none"/><path d="M6.7 6.7 L9.2 9.2" stroke="#6b4e0c" stroke-width="2" stroke-linecap="round"/></svg>
<span class="t" style="left:122.98px;top:676px;font-size:12.5px;line-height:14px;font-weight:normal;color:#000;transform:scaleX(0.8687);transform-origin:0 0;">Администратор информационной базы</span>
<span class="t" style="left:696.42px;top:676px;font-size:12.5px;line-height:14px;font-weight:normal;color:#3e3220;transform:scaleX(0.8775);transform-origin:0 0;">Дата исполнения:</span>
<div style="left:792px;top:673px;width:144px;height:19px;border:1px solid #ADA67E;border-radius:4px;box-sizing:border-box;background:#FCF9E8;box-shadow:inset 0 0 0 1px #fffffc,inset 0 0 0 2px rgba(255,255,255,0.45);overflow:hidden;"></div>
<div style="left:883px;top:686px;width:1px;height:1px;background:#444;"></div>
<div style="left:892px;top:686px;width:1px;height:1px;background:#444;"></div>
<div style="left:916px;top:681px;width:1px;height:1px;background:#444;"></div>
<div style="left:916px;top:686px;width:1px;height:1px;background:#444;"></div>
<div style="left:925px;top:681px;width:1px;height:1px;background:#444;"></div>
<div style="left:925px;top:686px;width:1px;height:1px;background:#444;"></div>
</div></body></html>
